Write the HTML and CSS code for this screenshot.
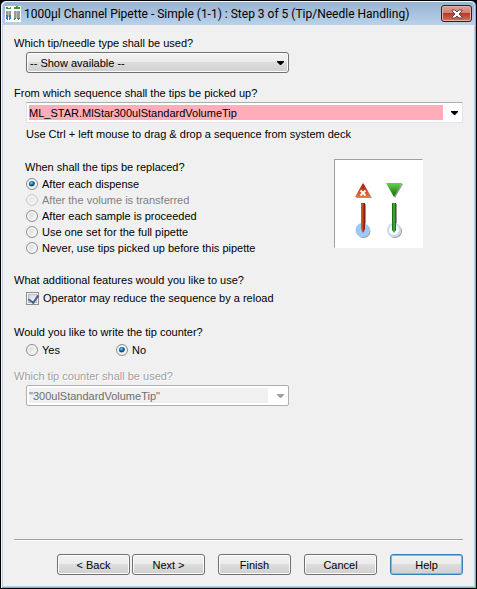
FILE: index.html
```
<!DOCTYPE html>
<html lang="en">
<head>
<meta charset="utf-8">
<title>1000µl Channel Pipette - Simple (1-1)</title>
<link rel="stylesheet" href="styles.css">
</head>
<body>
<main class="window">
  <header class="titlebar">
    <svg class="app-icon" viewBox="0 0 16 16" aria-hidden="true">
      <path fill="#fff" d="M0 0h16v16H0z"/>
      <path fill="#3c9b3c" d="M1 1h2v1h2V1h1v2H1zM9 1h2V0h2v1h2v2H9z"/>
      <path fill="#999" d="M1 5h2v6H1zM4 5h2v6H4zM9 5h2v7H9zM12 5h3v7h-3z"/>
      <path fill="#bbb" d="M3 5h1v6H3zM11 5h1v7h-1z"/>
      <path fill="#3478c8" d="M1 9h2v5H2v-1H1zM4 9h2v4H5v1H4z"/>
      <path fill="#398c39" d="M9 12h2v1h-1v1H9zM12 12h3v1h-1v1h-1v-1h-1z"/>
    </svg>
    <h1 class="title">1000µl Channel Pipette - Simple (1-1) : Step 3 of 5 (Tip/Needle Handling)</h1>
    <button class="close" type="button" aria-label="Close">
      <svg viewBox="0 0 12 10" width="12" height="10" aria-hidden="true">
        <path fill="#fff" stroke="#5b4a52" stroke-width="1" d="M1 1h3l2 2 2-2h3v1L8 5l3 3v1H8L6 7 4 9H1V8l3-3-3-3z"/>
      </svg>
    </button>
  </header>

  <form class="page">
    <section class="block">
      <label class="question" for="tip-type">Which tip/needle type shall be used?</label>
      <div class="drop short">
        <select id="tip-type" class="select"><option>-- Show available --</option></select>
        <svg class="arrow" viewBox="0 0 7 4" aria-hidden="true"><path d="M0 0h7v1L4 4H3L0 1z"/></svg>
      </div>
    </section>

    <section class="block">
      <label class="question" for="sequence">From which sequence shall the tips be picked up?</label>
      <div class="combo">
        <input id="sequence" class="combo-text" type="text" value="ML_STAR.MlStar300ulStandardVolumeTip">
        <button class="combo-button" type="button" aria-label="Show sequences">
          <svg class="glyph" viewBox="0 0 7 4" aria-hidden="true"><path d="M0 0h7v1L4 4H3L0 1z"/></svg>
        </button>
      </div>
      <p class="hint">Use Ctrl + left mouse to drag &amp; drop a sequence from system deck</p>
    </section>

    <div class="replace">
      <fieldset class="group">
        <legend>When shall the tips be replaced?</legend>
        <label class="choice"><input type="radio" name="replace" checked>After each dispense</label>
        <label class="choice off"><input type="radio" name="replace" disabled>After the volume is transferred</label>
        <label class="choice"><input type="radio" name="replace">After each sample is proceeded</label>
        <label class="choice"><input type="radio" name="replace">Use one set for the full pipette</label>
        <label class="choice"><input type="radio" name="replace">Never, use tips picked up before this pipette</label>
      </fieldset>
      <div class="preview">
        <svg viewBox="0 0 87 87" width="87" height="87" role="img" aria-label="Tip eject and pick up">
          <defs>
            <linearGradient id="red" x1="0" y1="0" x2="0" y2="1"><stop offset="0" stop-color="#a80c08"/><stop offset="1" stop-color="#e07a3c"/></linearGradient>
            <linearGradient id="green" x1="0" y1="0" x2="0" y2="1"><stop offset="0" stop-color="#6ad24c"/><stop offset="1" stop-color="#0a6a06"/></linearGradient>
            <linearGradient id="red-rod"><stop offset="0" stop-color="#e05a28"/><stop offset=".5" stop-color="#c83c10"/><stop offset="1" stop-color="#6e1404"/></linearGradient>
            <linearGradient id="green-rod"><stop offset="0" stop-color="#0c5c0a"/><stop offset=".5" stop-color="#4cb83a"/><stop offset="1" stop-color="#0c5c0a"/></linearGradient>
            <filter id="shade" x="-30%" y="-30%" width="170%" height="170%"><feDropShadow dx="1" dy="1" stdDeviation=".7" flood-opacity=".4"/></filter>
          </defs>
          <g filter="url(#shade)">
            <path fill="url(#red)" d="M28 23l8 14H20z"/>
            <circle cx="27.500" cy="70" r="7" fill="#9ccaf8"/>
            <path fill="url(#red-rod)" d="M26 43h4v26l-2 4-2-4z"/>
            <path fill="url(#green)" d="M51 23h16l-8 14z"/>
            <circle cx="59" cy="70" r="6" fill="#fff" stroke="#c5dcf2" stroke-width="2"/>
            <path fill="url(#green-rod)" d="M57 43h4v27l-2 3-2-3z"/>
          </g>
          <path stroke="#fff" stroke-width="2" d="M25.500 30.500l5 5m0-5l-5 5"/>
        </svg>
      </div>
    </div>

    <fieldset class="group features">
      <legend>What additional features would you like to use?</legend>
      <label class="choice"><input type="checkbox" checked>Operator may reduce the sequence by a reload</label>
    </fieldset>

    <fieldset class="group counter">
      <legend>Would you like to write the tip counter?</legend>
      <div class="pair">
        <label class="choice"><input type="radio" name="counter">Yes</label>
        <label class="choice"><input type="radio" name="counter" checked>No</label>
      </div>
    </fieldset>

    <section class="block">
      <label class="question muted" for="tip-counter">Which tip counter shall be used?</label>
      <div class="drop short">
        <select id="tip-counter" class="select" disabled><option>"300ulStandardVolumeTip"</option></select>
        <svg class="arrow pale" viewBox="0 0 7 4" aria-hidden="true"><path d="M0 0h7v1L4 4H3L0 1z"/></svg>
      </div>
    </section>

    <footer class="actions">
      <div class="steps">
        <button class="button" type="button">&lt; Back</button>
        <button class="button" type="button">Next &gt;</button>
      </div>
      <button class="button" type="button">Finish</button>
      <button class="button" type="button">Cancel</button>
      <button class="button focus" type="button">Help</button>
    </footer>
  </form>
</main>
</body>
</html>
```
FILE: styles.css
```
* { box-sizing: border-box; }

body {
  margin: 0;
  background: #000;
  color: #000;
  font: 11px/16px "Liberation Sans", Arial, sans-serif;
}

button, input, select { font: inherit; color: inherit; }

.window {
  display: flex;
  flex-direction: column;
  min-height: 100vh;
  border: 1px solid #000;
  border-radius: 6px 6px 0 0;
  background: #b9d1ea;
  box-shadow: inset 1px 1px #f4f9ff, inset -1px -1px #2ed0f5;
  padding: 1px 2px 2px;
}

.titlebar {
  display: flex;
  align-items: center;
  gap: 3px;
  height: 23px;
  padding: 0 2px;
  border-radius: 5px 5px 0 0;
  background: linear-gradient(#98b3d1, #b9d1ea);
}

.app-icon { width: 16px; height: 16px; }

.title {
  flex: 1;
  margin: 0;
  font: 12px/16px Roboto, "Open Sans", sans-serif;
  white-space: nowrap;
}

.close {
  display: flex;
  align-items: center;
  justify-content: center;
  width: 31px;
  height: 17px;
  padding: 0;
  border: 1px solid #48141e;
  border-radius: 3px;
  background: linear-gradient(#dba296, #cf8072 48%, #b93a26 50%, #d4735c);
  box-shadow: inset 0 0 0 1px #e6b0a4;
}

.page {
  flex: 1;
  display: flex;
  flex-direction: column;
  padding: 10px 11px 11px;
  background: #f0f0f0;
}

.block { display: flex; flex-direction: column; margin-bottom: 12px; }
.question { margin-bottom: 1px; }
.muted { color: #a0a0a0; text-shadow: 1px 1px #fff; }

.drop { display: grid; align-items: center; height: 21px; margin-left: 12px; }
.short { width: 60%; max-width: 263px; }
.drop > * { grid-area: 1 / 1; }

.select {
  width: 100%;
  height: 21px;
  padding: 0 3px;
  border: 1px solid #707070;
  border-radius: 3px;
  appearance: none;
  background: linear-gradient(#f2f2f2, #ebebeb 49%, #dddddd 50%, #cfcfcf);
  box-shadow: inset 0 0 0 1px #fcfcfc;
}

.select:disabled {
  padding: 0 2px;
  border-color: #afafaf;
  border-radius: 2px;
  background: #f0f0f0;
  box-shadow: inset 0 0 0 2px #fff, inset -20px 0 #fff;
  color: #6d6d6d;
  opacity: 1;
}

.arrow, .glyph { width: 7px; height: 4px; }
.arrow { justify-self: end; margin-right: 5px; pointer-events: none; }
.pale { fill: #a0a0a0; }

.combo {
  display: flex;
  height: 21px;
  margin-left: 12px;
  padding: 2px;
  border: 1px solid #e2e3ea;
  border-top-color: #abadb3;
  background: #fff;
}

.combo-text {
  flex: 1;
  min-width: 0;
  height: 15px;
  padding: 0;
  border: 0;
  background: #ffaeb9;
}

.combo-button {
  display: flex;
  align-items: center;
  justify-content: flex-end;
  width: 17px;
  padding: 0 2px;
  border: 0;
  background: none;
}

.hint { margin: 3px 0 0 12px; }

.replace { display: flex; margin: 5px 0 16px 11px; }
.replace .group { width: 309px; }
.replace .choice { margin-left: 1px; }
.replace legend { margin-bottom: 1px; }

.group { min-width: 0; margin: 0; padding: 0; border: 0; }
.group legend { padding: 0; }
.features, .counter { padding-left: 12px; }
.features legend, .counter legend { margin-left: -12px; }
.features .choice, .pair { margin-top: 2px; }
.features { margin-bottom: 18px; }
.counter { margin-bottom: 10px; }

.choice { display: flex; align-items: center; gap: 4px; height: 16px; white-space: nowrap; }
.off { color: #808080; }
.pair { display: grid; grid-template-columns: 90px 90px; }

input[type="radio"], input[type="checkbox"] {
  flex: none;
  width: 12px;
  height: 12px;
  margin: 0;
  appearance: none;
  border: 1px solid #8e8f8f;
  background: radial-gradient(circle at 65% 65%, #f4f4f4, #c4c8cc);
  box-shadow: inset 0 0 0 2px #f4f4f4;
}

input[type="radio"] { border-radius: 50%; }
input[type="radio"]:checked {
  background: radial-gradient(circle at 45% 40%, #7ddcff 0, #1987bb 18%, #0b3a5e 36%, #c4d4e0 46%);
}
input[type="radio"]:disabled { opacity: .4; }

input[type="checkbox"] {
  width: 13px;
  height: 13px;
  box-shadow: inset 0 0 0 1px #f4f4f4, inset 0 0 0 2px #b9bfc8;
}
input[type="checkbox"]:checked::before {
  content: "";
  display: block;
  width: 5px;
  height: 8px;
  margin: 0 0 0 3px;
  border: solid #4a5f97;
  border-width: 0 2px 2px 0;
  transform: rotate(35deg);
}

.preview {
  width: 89px;
  height: 89px;
  border: 1px solid #fff;
  border-top-color: #a0a0a0;
  border-left-color: #a0a0a0;
  background: #fff;
}
.preview svg { display: block; }

.actions {
  display: flex;
  justify-content: flex-end;
  gap: 13px;
  margin-top: auto;
  padding-top: 14px;
  border-top: 1px solid #a0a0a0;
  box-shadow: inset 0 1px #fff;
}

.steps { display: flex; gap: 2px; }

.button {
  width: 73px;
  height: 21px;
  padding: 0;
  border: 1px solid #707070;
  border-radius: 3px;
  background: linear-gradient(#f2f2f2, #ebebeb 49%, #dddddd 50%, #cfcfcf);
  box-shadow: inset 0 0 0 1px #fcfcfc;
}

.focus { border-color: #3c7fb1; box-shadow: inset 0 0 0 1px #46d2f5; }
```
